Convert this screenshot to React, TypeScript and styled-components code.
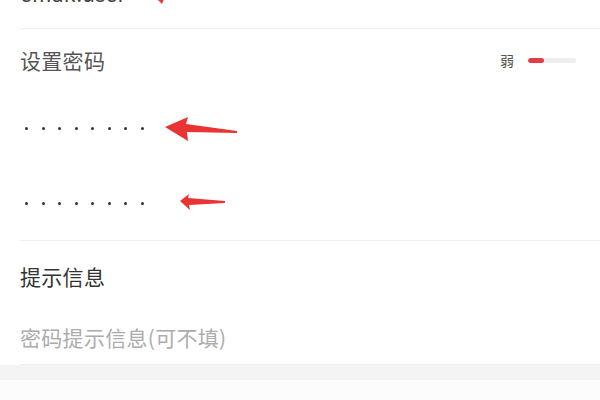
import React from "react";
import styled, { createGlobalStyle } from "styled-components";

const Global = createGlobalStyle`
  html, body { margin: 0; padding: 0; background: #ffffff; }
  body { font-family: "Noto Sans CJK SC", "Noto Sans", sans-serif; }
`;

const Page = styled.div`
  width: 600px;
  height: 400px;
  overflow: hidden;
  background: #ffffff;
  display: flex;
  flex-direction: column;
`;

const Scroller = styled.div`
  margin-top: -42px;
  display: flex;
  flex-direction: column;
`;

const Row = styled.div<{ $h: number }>`
  position: relative;
  height: ${(p) => p.$h}px;
  padding: 0 24px 0 20px;
  display: flex;
  align-items: center;
  justify-content: space-between;
  box-sizing: border-box;
`;

const Label = styled.span<{ $color?: string }>`
  font-size: 21px;
  line-height: 1;
  color: ${(p) => p.$color ?? "#555"};
  letter-spacing: 0.3px;
`;

const Divider = styled.div`
  height: 1px;
  margin-left: 20px;
  background: #efefef;
`;

const Strength = styled.div`
  display: flex;
  align-items: center;
  gap: 14px;
`;

const StrengthText = styled.span`
  font-size: 14px;
  color: #555;
`;

const Track = styled.div`
  width: 48px;
  height: 5px;
  border-radius: 3px;
  background: #eeeeee;
  overflow: hidden;
  display: flex;
`;

const Fill = styled.div`
  height: 100%;
  background: #e63a47;
  border-radius: 3px;
`;

const Dots = styled.div`
  display: flex;
  gap: 13.5px;
  padding-left: 5px;
`;

const Dot = styled.span`
  width: 3px;
  height: 3px;
  border-radius: 50%;
  background: #333;
`;

const Arrow = styled.svg<{ $l: number; $t: number }>`
  position: absolute;
  left: ${(p) => p.$l}px;
  top: ${(p) => p.$t}px;
`;

const Band = styled.div`
  height: 15px;
  background: #f4f4f4;
`;

const Rest = styled.div`
  flex: 1;
  background: #fcfcfc;
`;

const DotRow = () => (
  <Dots>
    {Array.from({ length: 8 }).map((_, i) => (
      <Dot key={i} />
    ))}
  </Dots>
);

export default function App() {
  return (
    <Page>
      <Global />
      <Scroller>
        <Row $h={70}>
          <Label $color="#444">email.user</Label>
          <Arrow $l={150} $t={36} width="20" height="14" viewBox="0 0 20 14">
            <polygon points="2,0 16,0 12,10" fill="#e83a3a" />
          </Arrow>
        </Row>
        <Divider />
        <Row $h={62}>
          <Label>设置密码</Label>
          <Strength>
            <StrengthText>弱</StrengthText>
            <Track>
              <Fill style={{ width: "33%" }} />
            </Track>
          </Strength>
        </Row>
        <Row $h={75}>
          <DotRow />
          <Arrow $l={164} $t={24} width="76" height="28" viewBox="0 0 76 28">
            <polygon points="1,12 24,2 22,9 73,16 73,18 23,17 24,26" fill="#ea3434" />
          </Arrow>
        </Row>
        <Row $h={74}>
          <DotRow />
          <Arrow $l={179} $t={27} width="48" height="20" viewBox="0 0 48 20">
            <polygon points="1,8 10,1 9,5 46,8 46,10 10,12 11,17" fill="#ea3434" />
          </Arrow>
        </Row>
        <Divider />
        <Row $h={70}>
          <Label $color="#333">提示信息</Label>
        </Row>
        <Row $h={53}>
          <Label $color="#acacac">密码提示信息(可不填)</Label>
        </Row>
        <Divider />
      </Scroller>
      <Band />
      <Rest />
    </Page>
  );
}
